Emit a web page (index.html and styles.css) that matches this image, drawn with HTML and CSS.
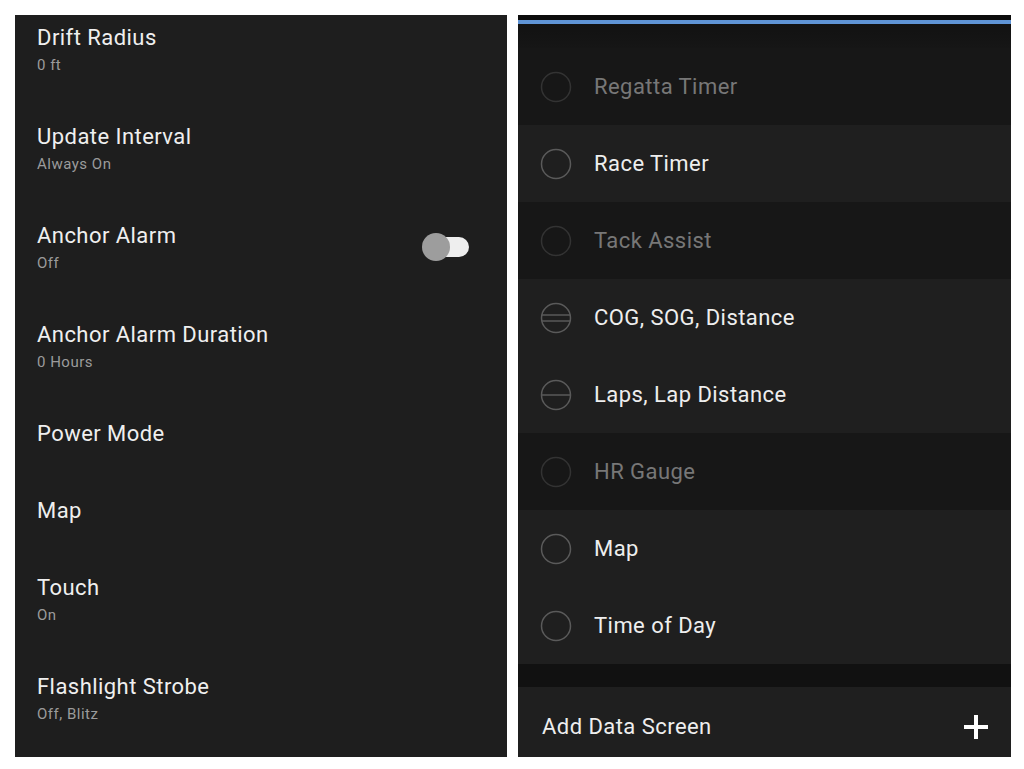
FILE: index.html
```html
<!DOCTYPE html>
<html>
<head>
<meta charset="utf-8">
<link rel="stylesheet" href="styles.css">
</head>
<body>
<div class="page">
  <section class="panel settings">
    <div class="list">
      <div class="srow"><div class="title">Drift Radius</div><div class="sub">0 ft</div></div>
      <div class="srow"><div class="title">Update Interval</div><div class="sub">Always On</div></div>
      <div class="srow toggle-row">
        <div class="text"><div class="title">Anchor Alarm</div><div class="sub">Off</div></div>
        <div class="toggle"><span class="track"></span><span class="knob"></span></div>
      </div>
      <div class="srow"><div class="title">Anchor Alarm Duration</div><div class="sub">0 Hours</div></div>
      <div class="srow"><div class="title">Power Mode</div></div>
      <div class="srow"><div class="title">Map</div></div>
      <div class="srow"><div class="title">Touch</div><div class="sub">On</div></div>
      <div class="srow"><div class="title">Flashlight Strobe</div><div class="sub">Off, Blitz</div></div>
    </div>
  </section>
  <section class="panel screens">
    <div class="accent"></div>
    <div class="header"></div>
    <div class="drow off">
      <svg class="ico" viewBox="0 0 32 32"><circle cx="16" cy="16" r="14.5"/></svg>
      <span class="label">Regatta Timer</span>
    </div>
    <div class="drow">
      <svg class="ico" viewBox="0 0 32 32"><circle cx="16" cy="16" r="14.5"/></svg>
      <span class="label">Race Timer</span>
    </div>
    <div class="drow off">
      <svg class="ico" viewBox="0 0 32 32"><circle cx="16" cy="16" r="14.5"/></svg>
      <span class="label">Tack Assist</span>
    </div>
    <div class="drow">
      <svg class="ico" viewBox="0 0 32 32"><circle cx="16" cy="16" r="14.5"/><line x1="2" y1="13" x2="30" y2="13"/><line x1="2" y1="19" x2="30" y2="19"/></svg>
      <span class="label">COG, SOG, Distance</span>
    </div>
    <div class="drow">
      <svg class="ico" viewBox="0 0 32 32"><circle cx="16" cy="16" r="14.5"/><line x1="1.5" y1="16" x2="30.5" y2="16"/></svg>
      <span class="label">Laps, Lap Distance</span>
    </div>
    <div class="drow off">
      <svg class="ico" viewBox="0 0 32 32"><circle cx="16" cy="16" r="14.5"/></svg>
      <span class="label">HR Gauge</span>
    </div>
    <div class="drow">
      <svg class="ico" viewBox="0 0 32 32"><circle cx="16" cy="16" r="14.5"/></svg>
      <span class="label">Map</span>
    </div>
    <div class="drow">
      <svg class="ico" viewBox="0 0 32 32"><circle cx="16" cy="16" r="14.5"/></svg>
      <span class="label">Time of Day</span>
    </div>
    <div class="band"></div>
    <div class="addrow">
      <span class="label">Add Data Screen</span>
      <svg class="plus" viewBox="0 0 26 26"><path d="M13 1V25M1 13H25"/></svg>
    </div>
  </section>
</div>
</body>
</html>
```
FILE: styles.css
```css
* { box-sizing: border-box; }
html, body { margin: 0; padding: 0; background: #ffffff; }
body { font-family: Roboto, "Noto Sans", "Liberation Sans", sans-serif; }

.page {
  display: flex;
  gap: 11px;
  padding: 15px 13px 12px 15px;
  height: 769px;
}

.panel {
  height: 742px;
  overflow: hidden;
}

.settings {
  width: 492px;
  background: #1e1e1e;
}

.list { margin-top: -15px; }

.srow {
  padding: 24px 22px 22px 22px;
}

.toggle-row {
  display: flex;
  align-items: center;
  justify-content: space-between;
  padding-right: 38px;
}

.title {
  font-size: 22px;
  line-height: 28px;
  letter-spacing: 0.45px;
  color: #efefef;
}

.sub {
  margin-top: 2px;
  font-size: 15px;
  line-height: 23px;
  letter-spacing: 0.5px;
  color: #9b9b9b;
}

.srow:not(:has(.sub)) { padding-bottom: 25px; }

.toggle {
  position: relative;
  width: 47px;
  height: 29px;
  margin-top: -3px;
}
.track {
  position: absolute;
  right: 0;
  top: 4px;
  width: 36px;
  height: 20px;
  border-radius: 10px;
  background: #eeeeee;
}
.knob {
  position: absolute;
  left: 0;
  top: 0;
  width: 28px;
  height: 28px;
  border-radius: 50%;
  background: #9d9d9d;
}

.screens {
  width: 493px;
  background: #1f1f1f;
  display: flex;
  flex-direction: column;
}

.accent {
  height: 10px;
  flex: none;
  background: linear-gradient(#0c0c0c 0 5px, #5f94d6 5px 9px, #121212 9px);
}

.header {
  height: 23px;
  flex: none;
  background: linear-gradient(#121212, #161616);
}

.drow {
  height: 77px;
  flex: none;
  display: flex;
  align-items: center;
  padding-left: 22px;
  padding-top: 1px;
  background: #1f1f1f;
}
.drow.off { background: #171717; }

.ico {
  width: 32px;
  height: 32px;
  margin-right: 22px;
  fill: none;
  stroke: #5a5a5a;
  stroke-width: 1.5;
}
.drow.off .ico { stroke: #333333; }

.label {
  font-size: 22px;
  line-height: 28px;
  letter-spacing: 0.45px;
  color: #eeeeee;
}
.drow.off .label { color: #777777; }

.band {
  height: 23px;
  flex: none;
  background: #111111;
}

.addrow {
  height: 80px;
  flex: none;
  display: flex;
  align-items: center;
  justify-content: space-between;
  padding: 0 22px 0 24px;
  background: #1f1f1f;
}

.plus {
  width: 26px;
  height: 26px;
  fill: none;
  stroke: #ffffff;
  stroke-width: 4;
}
```
